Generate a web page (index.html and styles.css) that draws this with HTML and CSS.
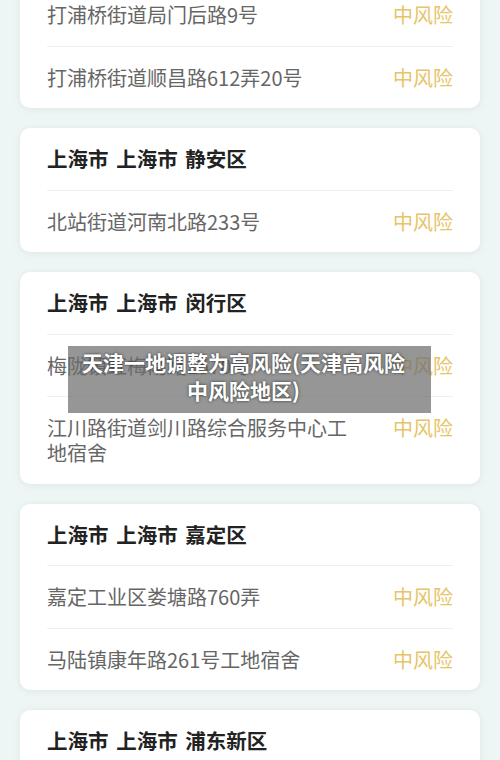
FILE: index.html
```html
<!DOCTYPE html>
<html lang="zh-CN">
<head>
    <meta charset="utf-8" />
    <title>天津一地调整为高风险(天津高风险中风险地区)</title>
    <link rel="stylesheet" href="styles.css">
</head>
<body>
    <div id="list">
        <div class="card">
            <div class="row"><span class="addr">打浦桥街道局门后路9号</span><span class="risk">中风险</span></div>
            <div class="row"><span class="addr">打浦桥街道顺昌路612弄20号</span><span class="risk">中风险</span></div>
        </div>
        <div class="card">
            <div class="row head">上海市 上海市 静安区</div>
            <div class="row"><span class="addr">北站街道河南北路233号</span><span class="risk">中风险</span></div>
        </div>
        <div class="card">
            <div class="row head">上海市 上海市 闵行区</div>
            <div class="row"><span class="addr">梅陇镇虹梅南路1570号</span><span class="risk">中风险</span></div>
            <div class="row"><span class="addr">江川路街道剑川路综合服务中心工地宿舍</span><span class="risk">中风险</span></div>
        </div>
        <div class="card">
            <div class="row head">上海市 上海市 嘉定区</div>
            <div class="row"><span class="addr">嘉定工业区娄塘路760弄</span><span class="risk">中风险</span></div>
            <div class="row"><span class="addr">马陆镇康年路261号工地宿舍</span><span class="risk">中风险</span></div>
        </div>
        <div class="card">
            <div class="row head">上海市 上海市 浦东新区</div>
        </div>
    </div>
    <div id="caption">天津一地调整为高风险(天津高风险<br>中风险地区)</div>
</body>
</html>
```

FILE: styles.css
```css
html, body {
    margin: 0;
    padding: 0;
    height: 100%;
    overflow: hidden;
    background: #eef5f5;
    font-family: "Noto Sans CJK SC", "Noto Sans", sans-serif;
}
body {
    position: relative;
}
#list {
    display: flex;
    flex-direction: column;
    gap: 20px;
    padding: 0 20px;
    margin-top: -16px;
}
.card {
    background: #fff;
    border-radius: 10px;
    padding: 0 27px;
    box-shadow: 0 1px 6px rgba(160, 190, 190, 0.25);
}
.row {
    display: flex;
    align-items: flex-start;
    gap: 40px;
    padding: 18.25px 0;
    border-top: 1px solid #eef0f0;
    font-size: 20px;
    line-height: 25px;
    color: #666;
}
.card .row:first-child {
    border-top: none;
}
.head {
    color: #222;
    font-weight: bold;
    font-size: 20.5px;
    word-spacing: 3px;
}
.addr {
    flex: 1;
}
.risk {
    color: #e7c467;
    white-space: nowrap;
}
#caption {
    position: absolute;
    top: 346px;
    left: 68px;
    width: 363px;
    box-sizing: border-box;
    padding: 2px 14px 9px 2px;
    background: rgba(110, 110, 110, 0.72);
    color: #fff;
    font-size: 21px;
    font-weight: bold;
    line-height: 28px;
    text-align: center;
    white-space: nowrap;
    text-shadow: 0 0 3px rgba(0, 0, 0, 0.7);
}
```
